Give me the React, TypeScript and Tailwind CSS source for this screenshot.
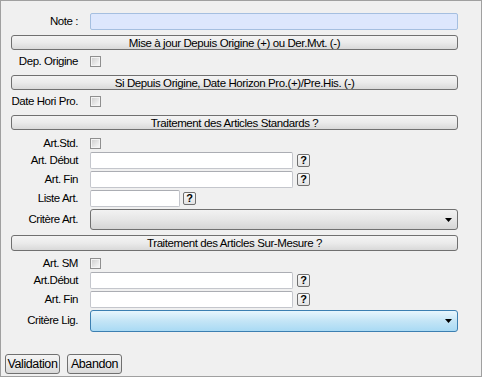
import React from 'react';

const font = { fontFamily: '"Liberation Sans", Arial, sans-serif' };

function SectionButton({ label, className = '' }: { label: string; className?: string }) {
  return (
    <div
      className={`h-[15px] flex items-center justify-center rounded-[3px] border border-[#707070] bg-gradient-to-b from-[#f4f4f4] via-[#ebebeb] to-[#d9d9d9] text-[11.5px] leading-[13px] pt-[1px] tracking-[-0.4px] text-black whitespace-nowrap ${className}`}
    >
      {label}
    </div>
  );
}

function Label({ text }: { text: string }) {
  return (
    <div className="w-[67px] shrink-0 text-right text-[11.5px] leading-none tracking-[-0.45px] text-black whitespace-nowrap">
      {text}
    </div>
  );
}

function CheckRow({ label, className = '' }: { label: string; className?: string }) {
  return (
    <div className={`flex items-center h-[11px] ${className}`}>
      <Label text={label} />
      <div className="ml-[12px] w-[11px] h-[11px] border border-[#8f8f8f] p-[1px] bg-[#f4f4f4]">
        <div className="w-full h-full bg-gradient-to-br from-[#d2d2d2] to-[#f6f6f6]" />
      </div>
    </div>
  );
}

function Help() {
  return (
    <div className="w-[13px] h-[13px] flex items-center justify-center rounded-[2px] border border-[#707070] bg-gradient-to-b from-[#fafafa] to-[#e4e4e4] text-[11px] font-bold leading-none text-black">
      ?
    </div>
  );
}

function InputRow({ label, width, help = true, gap = 'ml-[4px]', className = '' }: { label: string; width: string; help?: boolean; gap?: string; className?: string }) {
  return (
    <div className={`flex items-center h-[17px] ${className}`}>
      <Label text={label} />
      <div className={`ml-[12px] h-[17px] ${width} border border-[#c4c6cc] border-t-[#abadb3] bg-white rounded-[2px]`} />
      {help && <div className={gap}><Help /></div>}
    </div>
  );
}

function Arrow() {
  return (
    <svg width="7" height="4" viewBox="0 0 7 4" className="mr-[5px]">
      <path d="M0 0 H7 L3.5 4 Z" fill="#000" />
    </svg>
  );
}

function Select({ label, active = false, className = '' }: { label: string; active?: boolean; className?: string }) {
  return (
    <div className={`flex items-center ${className}`}>
      <Label text={label} />
      <div
        className={`ml-[12px] flex-1 flex items-center justify-end rounded-[3px] border ${
          active
            ? 'h-[22px] border-[#3c7fb1] bg-gradient-to-b from-[#e8f6fd] via-[#c4e5f6] to-[#a9daf4]'
            : 'h-[21px] border-[#707070] bg-gradient-to-b from-[#f2f2f2] via-[#e6e6e6] to-[#d5d5d5]'
        }`}
      >
        <Arrow />
      </div>
    </div>
  );
}

function Btn({ label }: { label: string }) {
  return (
    <div className="w-[55px] h-[20px] flex items-center justify-center rounded-[3px] border border-[#707070] bg-gradient-to-b from-[#f4f4f4] via-[#ebebeb] to-[#d9d9d9] text-[12.5px] tracking-[-0.4px] text-black">
      {label}
    </div>
  );
}

export default function App() {
  return (
    <div style={font} className="w-[482px] h-[377px] border border-[#a0a0a0] bg-[#f0f0f0] overflow-hidden">
      <div className="pl-[10px] pr-[23px] pt-[12px] flex flex-col">
        <div className="flex items-center h-[17px]">
          <Label text="Note :" />
          <div className="ml-[12px] flex-1 h-[17px] border border-[#a5bfe0] bg-[#dde7fd] rounded-[2px]" />
        </div>
        <SectionButton className="mt-[5px]" label="Mise à jour Depuis Origine (+) ou Der.Mvt. (-)" />
        <CheckRow className="mt-[6px]" label="Dep. Origine" />
        <SectionButton className="mt-[8px]" label="Si Depuis Origine, Date Horizon Pro.(+)/Pre.His. (-)" />
        <CheckRow className="mt-[6px]" label="Date Hori Pro." />
        <SectionButton className="mt-[8px]" label="Traitement des Articles Standards ?" />
        <CheckRow className="mt-[8px]" label="Art.Std." />
        <InputRow className="mt-[3px]" label="Art. Début" width="w-[203px]" />
        <InputRow className="mt-[2px]" label="Art. Fin" width="w-[203px]" />
        <InputRow className="mt-[2px]" label="Liste Art." width="w-[90px]" gap="ml-[3px]" />
        <Select className="mt-[2px]" label="Critère Art." />
        <SectionButton className="mt-[5px] h-[16px]" label="Traitement des Articles Sur-Mesure ?" />
        <CheckRow className="mt-[7px]" label="Art. SM" />
        <InputRow className="mt-[3px]" label="Art.Début" width="w-[203px]" />
        <InputRow className="mt-[2px]" label="Art. Fin" width="w-[203px]" />
        <Select className="mt-[2px]" label="Critère Lig." active />
      </div>
      <div className="flex gap-[7px] pl-[4px] mt-[22px]">
        <Btn label="Validation" />
        <Btn label="Abandon" />
      </div>
    </div>
  );
}
